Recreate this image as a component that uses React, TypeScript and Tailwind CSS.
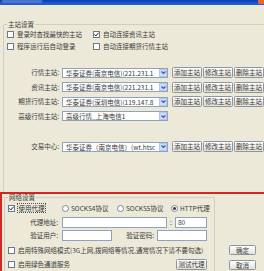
import type { ReactNode } from 'react';

function Check({ checked = false }: { checked?: boolean }) {
  return (
    <span className="flex h-[7px] w-[7px] shrink-0 items-center justify-center border border-[#6a7a8e] bg-white">
      {checked && (
        <svg viewBox="0 0 7 7" className="h-[5px] w-[5px]">
          <polyline points="0.6,3.4 2.6,5.6 6.4,1" fill="none" stroke="#222" strokeWidth="1.4" />
        </svg>
      )}
    </span>
  );
}

function Radio({ selected = false }: { selected?: boolean }) {
  return (
    <span className="flex h-[7px] w-[7px] shrink-0 items-center justify-center rounded-full border border-[#7a889a] bg-white">
      {selected && <span className="h-[3px] w-[3px] rounded-full bg-[#333]" />}
    </span>
  );
}

function Combo({ text }: { text: string }) {
  return (
    <div className="flex h-[10px] w-[106px] items-center border border-[#8ea3c0] bg-white">
      <span className="min-w-0 flex-1 overflow-hidden whitespace-nowrap pl-[3px] leading-[8px]">{text}</span>
      <span className="flex h-[8px] w-[8px] shrink-0 items-center justify-center border border-[#b3c6ee] bg-[#cddbfa]">
        <svg viewBox="0 0 5 3" className="h-[3px] w-[5px]">
          <polyline points="0.5,0.5 2.5,2.5 4.5,0.5" fill="none" stroke="#3d5a9c" strokeWidth="1.1" />
        </svg>
      </span>
    </div>
  );
}

function Btn({ children, className = 'w-[30px] h-[11px]' }: { children: ReactNode; className?: string }) {
  return (
    <button
      className={`flex shrink-0 items-center justify-center rounded-[1.5px] border border-[#8c95a3] bg-linear-to-b from-white to-[#e3e1d6] text-[6.5px] leading-none text-[#3a3a3a] ${className}`}
    >
      {children}
    </button>
  );
}

function Field({ className }: { className: string }) {
  return <div className={`h-[11px] shrink-0 border border-[#8ea3c0] bg-white ${className}`} />;
}

// values shown as far as the combo box lets them be read
const servers = [
  { label: '行情主站:', value: '华泰证券(南京电信)(221.231.1', buttons: true },
  { label: '资讯主站:', value: '华泰证券(南京电信)(221.231.1', buttons: true },
  { label: '期货行情主站:', value: '华泰证券(深圳电信)(119.147.8', buttons: true },
  { label: '高级行情主站:', value: '高级行情_上海电信1', buttons: false },
];

export default function App() {
  return (
    <div className="h-[271px] w-[264px] overflow-hidden bg-[#ece9d8] font-['Noto_Sans_CJK_SC',sans-serif] text-[6.5px] leading-none text-[#3a3a3a]">
      {/* title bar */}
      <div className="flex h-[5px] items-start justify-between bg-linear-to-b from-[#0a3fb4] to-[#2a62d8]">
        <span className="ml-[2px] h-[3px] w-[40px] bg-[#6f8fd8] opacity-60" />
        <span className="h-[4px] w-[6px] rounded-b-[1px] bg-[#e2653c]" />
      </div>

      {/* 主站设置 */}
      <fieldset className="ml-[3px] mt-[15px] h-[172px] w-[285px] rounded-t-[2px] border border-b-0 border-[#d0cebf]">
        <legend className="ml-[3px] px-[1px] leading-[8px]">主站设置</legend>
        <div className="grid grid-cols-[86px_1fr] gap-y-[2px] pl-[3px] pt-[1px]">
          <label className="flex h-[10px] items-center gap-[3px]"><Check />登录时查找最快的主站</label>
          <label className="flex h-[10px] items-center gap-[3px]"><Check checked />自动连接资讯主站</label>
          <label className="flex h-[10px] items-center gap-[3px]"><Check />程序运行后自动登录</label>
          <label className="flex h-[10px] items-center gap-[3px]"><Check />自动连接期货行情主站</label>
        </div>

        <div className="mt-[16px] flex flex-col gap-[3.5px]">
          {servers.map((s) => (
            <div key={s.label} className="flex h-[11px] items-center">
              <span className="w-[55px] text-right">{s.label}</span>
              <div className="ml-[3px]">
                <Combo text={s.value} />
              </div>
              {s.buttons && (
                <div className="ml-[4px] flex gap-[1px]">
                  <Btn>添加主站</Btn>
                  <Btn>修改主站</Btn>
                  <Btn>删除主站</Btn>
                </div>
              )}
            </div>
          ))}
        </div>

        <div className="mt-[19.5px] flex h-[11px] items-center">
          <span className="w-[55px] text-right">交易中心:</span>
          <div className="ml-[3px]">
            <Combo text="华泰证券（南京电信）(wt.htsc" />
          </div>
          <div className="ml-[4px] flex gap-[1px]">
            <Btn>添加主站</Btn>
            <Btn>修改主站</Btn>
            <Btn>删除主站</Btn>
          </div>
        </div>
      </fieldset>

      {/* 网络设置 (highlighted) */}
      <div className="flex h-[79px] w-[280px] border-l-2 border-t-2 border-[#d3261f]">
        <fieldset className="ml-[2px] h-[90px] w-[211px] shrink-0 rounded-t-[2px] border border-b-0 border-[#d0cebf]">
          <legend className="ml-[3px] px-[1px] leading-[6px]">网络设置</legend>

          <div className="mt-[3px] flex h-[10px] items-center pl-[3px]">
            <label className="flex w-[54px] items-center gap-[2px]">
              <Check checked />
              <span className="border border-dotted border-[#555] px-[0.5px] leading-[8px]">使用代理</span>
            </label>
            <label className="flex w-[55px] items-center gap-[2px]"><Radio />SOCKS4协议</label>
            <label className="flex w-[54px] items-center gap-[2px]"><Radio />SOCKS5协议</label>
            <label className="flex items-center gap-[2px]"><Radio selected />HTTP代理</label>
          </div>

          <div className="mt-[4px] flex h-[11px] items-center">
            <span className="w-[53px] text-right">代理地址:</span>
            <Field className="ml-[4px] w-[105px]" />
            <span className="w-[8px] text-center">:</span>
            <div className="flex h-[11px] w-[32px] items-center border border-[#8ea3c0] bg-white pl-[2px]">80</div>
          </div>

          <div className="mt-[2px] flex h-[11px] items-center">
            <span className="w-[53px] text-right">验证用户:</span>
            <Field className="ml-[4px] w-[50px]" />
            <span className="w-[42px] text-right">验证密码:</span>
            <Field className="ml-[3px] w-[50px]" />
          </div>

          <label className="mt-[4px] flex h-[10px] items-center gap-[3px] whitespace-nowrap pl-[3px]">
            <Check />
            启用特殊网络模式(3G上网,拨网络等情况,通常情况下请不要勾选)
          </label>

          <div className="mt-[4px] flex h-[11px] items-center pl-[3px] pr-[7px]">
            <label className="flex flex-1 items-center gap-[3px]">
              <Check />
              启用绿色通道服务
            </label>
            <Btn className="h-[11px] w-[31px]">测试代理</Btn>
          </div>
        </fieldset>

        <div className="flex flex-col gap-[5px] pl-[14px] pt-[51px]">
          <Btn className="h-[10px] w-[27px]">确定</Btn>
          <Btn className="h-[10px] w-[27px]">取消</Btn>
        </div>
      </div>
    </div>
  );
}
